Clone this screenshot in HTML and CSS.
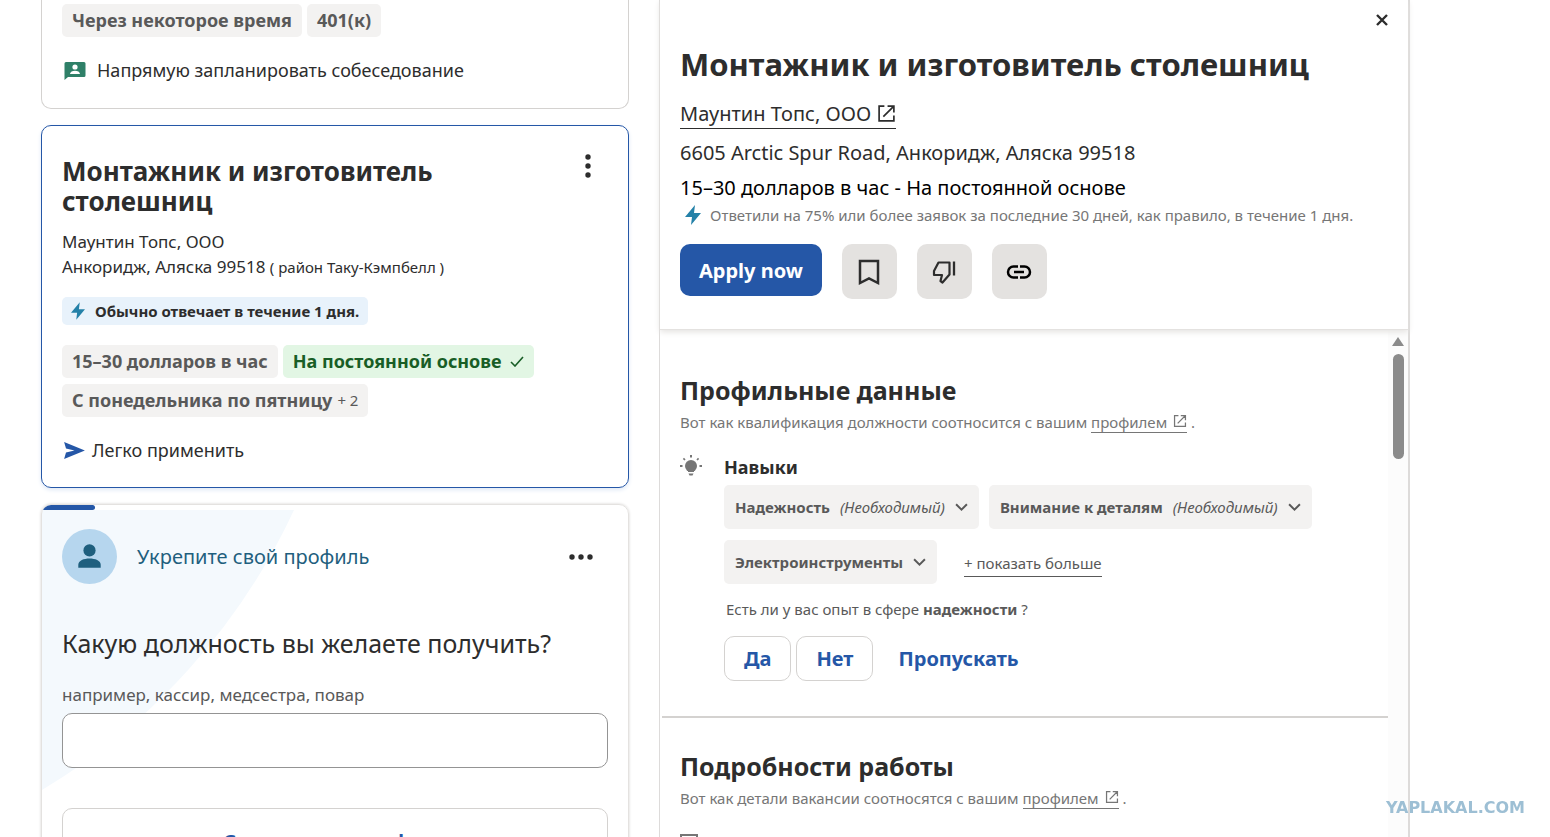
FILE: index.html
```html
<!DOCTYPE html>
<html lang="ru">

<head>
    <meta charset="UTF-8">
    <meta name="viewport" content="width=device-width, initial-scale=1">
    <title>Монтажник и изготовитель столешниц</title>
    <link rel="stylesheet" href="styles.css">
</head>

<body>

    <svg class="sprite" aria-hidden="true">
        <symbol id="bolt" viewBox="0 0 16 20">
            <path d="M10 0L0 12h7L6 20 16 8H9z" fill="#2481a8" />
        </symbol>
        <symbol id="external" viewBox="0 0 18 18">
            <path d="M7 2H2v14h14v-5M10 2h6v6M16 2L6 12" fill="none" stroke="currentColor" stroke-width="1.6" />
        </symbol>
        <symbol id="chevron" viewBox="0 0 12 8">
            <path d="M1 1l5 5 5-5" fill="none" stroke="currentColor" stroke-width="1.8" />
        </symbol>
    </svg>

    <main class="wrapper">
        <section class="results">
            <article class="card card-first">
                <ul class="tags">
                    <li class="tag">Через некоторое время</li>
                    <li class="tag">401(к)</li>
                </ul>
                <p class="note note-schedule">
                    <svg class="icon-schedule" viewBox="0 0 22 19">
                        <path d="M2 1h18a1.5 1.5 0 0 1 1.5 1.5v12a1.5 1.5 0 0 1-1.5 1.5H4l-3.5 3V2.5a1.5 1.5 0 0 1 1.5-1.5z" fill="#2f8068" />
                        <circle cx="11" cy="6" r="2.6" fill="#fff" />
                        <path d="M6 13c0-4.5 10-4.5 10 0z" fill="#fff" />
                    </svg>
                    Напрямую запланировать собеседование
                </p>
            </article>

            <article class="card card-active">
                <div class="card-head">
                    <h2>Монтажник и изготовитель столешниц</h2>
                    <button class="more" aria-label="Меню вакансии">
                        <svg class="dots-vertical" viewBox="0 0 6 24">
                            <circle cx="3" cy="3" r="2.7" />
                            <circle cx="3" cy="12" r="2.7" />
                            <circle cx="3" cy="21" r="2.7" />
                        </svg>
                    </button>
                </div>
                <p class="company">Маунтин Топс, ООО</p>
                <p class="company">Анкоридж, Аляска 99518 <small>( район Таку-Кэмпбелл )</small></p>
                <p class="badge"><svg class="icon-bolt">
                        <use href="#bolt" />
                    </svg>Обычно отвечает в течение 1 дня.</p>
                <ul class="tags">
                    <li class="tag">15–30 долларов в час</li>
                    <li class="tag match">На постоянной основе
                        <svg class="icon-check" viewBox="0 0 14 11">
                            <path d="M1 6l4 4 8-9" fill="none" stroke="currentColor" stroke-width="1.6" />
                        </svg>
                    </li>
                    <li class="tag">С понедельника по пятницу <small>+ 2</small></li>
                </ul>
                <p class="note note-apply">
                    <svg class="icon-send" viewBox="0 0 22 18">
                        <path d="M0 0l22 9-22 9 2-7 9-2-9-2z" fill="#2557a7" />
                    </svg>
                    Легко применить
                </p>
            </article>

            <article class="card card-profile">
                <svg class="backdrop" viewBox="0 0 252 280">
                    <path d="M0 0H252A642 642 0 0 1 0 280z" fill="#f4f9fd" />
                </svg>
                <div class="progress"></div>
                <div class="profile-head">
                    <svg class="avatar" viewBox="0 0 54 54">
                        <circle cx="27" cy="27" r="27" fill="#b6d6ee" />
                        <circle cx="27" cy="21" r="6" fill="#1f5f7e" />
                        <path d="M16 38v-3c0-8 22-8 22 0v3z" fill="#1f5f7e" />
                    </svg>
                    <h3>Укрепите свой профиль</h3>
                    <button class="more" aria-label="Меню профиля">
                        <svg class="dots-horizontal" viewBox="0 0 24 6">
                            <circle cx="3" cy="3" r="2.7" />
                            <circle cx="12" cy="3" r="2.7" />
                            <circle cx="21" cy="3" r="2.7" />
                        </svg>
                    </button>
                </div>
                <form>
                    <p class="question">Какую должность вы желаете получить?</p>
                    <label for="position">например, кассир, медсестра, повар</label>
                    <input type="text" id="position">
                    <button type="button" class="save">Сохранить в профиль</button>
                </form>
            </article>
        </section>

        <section class="details">
            <header>
                <button class="close" aria-label="Закрыть">
                    <svg viewBox="0 0 12 12">
                        <path d="M1 1l10 10M11 1L1 11" stroke="currentColor" stroke-width="2.4" />
                    </svg>
                </button>
                <h1>Монтажник и изготовитель столешниц</h1>
                <a class="employer" href="#">Маунтин Топс, ООО <svg class="icon-external">
                        <use href="#external" />
                    </svg></a>
                <p class="address">6605 Arctic Spur Road, Анкоридж, Аляска 99518</p>
                <p class="salary">15–30 долларов в час - На постоянной основе</p>
                <p class="response"><svg class="icon-bolt">
                        <use href="#bolt" />
                    </svg>Ответили на 75% или более заявок за последние 30 дней, как правило, в течение 1 дня.</p>
                <div class="actions">
                    <button class="apply">Apply now</button>
                    <button class="action" aria-label="Сохранить">
                        <svg viewBox="0 0 26 26">
                            <path d="M4 2h18v22l-9-4.5-9 4.5z" fill="none" stroke="#2d2d2d" stroke-width="2.5" />
                        </svg>
                    </button>
                    <button class="action" aria-label="Не интересует">
                        <svg viewBox="0 0 26 26">
                            <path d="M18.5 3.5H7.5L3 12v4h8l-1.5 6 2 1.5 7-8z" fill="none" stroke="#2d2d2d" stroke-width="2.2" stroke-linejoin="round" />
                            <path d="M23 2.5v14" stroke="#2d2d2d" stroke-width="2.3" />
                        </svg>
                    </button>
                    <button class="action" aria-label="Скопировать ссылку">
                        <svg viewBox="0 0 26 26">
                            <path d="M12 7.5H7.500a5 5 0 0 0 0 11H12M14 7.5h4.500a5 5 0 0 1 0 11H14M8 13h10" fill="none" stroke="#000" stroke-width="2.5" />
                        </svg>
                    </button>
                </div>
            </header>

            <div class="scroller">
                <div class="content">
                    <section class="block">
                        <h2>Профильные данные</h2>
                        <p class="hint">Вот как квалификация должности соотносится с вашим <a href="#">профилем <svg class="icon-external">
                                    <use href="#external" />
                                </svg></a> .</p>
                        <div class="skills">
                            <svg class="icon-bulb" viewBox="0 0 22 22">
                                <circle cx="11" cy="11" r="6" />
                                <path d="M8 14h6v3H8zM8.5 18.5h5l-1 2h-3z" />
                                <path d="M0 10h2.500v2H0zM19.5 10H22v2h-2.500zM10 0h2v2.500h-2zM2.800 4l1.200-1.200 1.600 1.600-1.200 1.200zM19.200 4L18 2.800l-1.600 1.600 1.200 1.200z" />
                            </svg>
                            <div>
                                <h3>Навыки</h3>
                                <div class="skill-list">
                                    <button class="skill">Надежность <i>(Необходимый)</i><svg class="icon-chevron">
                                            <use href="#chevron" />
                                        </svg></button>
                                    <button class="skill">Внимание к деталям <i>(Необходимый)</i><svg class="icon-chevron">
                                            <use href="#chevron" />
                                        </svg></button>
                                    <button class="skill">Электроинструменты<svg class="icon-chevron">
                                            <use href="#chevron" />
                                        </svg></button>
                                    <a class="show-more" href="#">+ показать больше</a>
                                </div>
                                <p class="ask">Есть ли у вас опыт в сфере <b>надежности</b> ?</p>
                                <div class="answers">
                                    <button>Да</button>
                                    <button>Нет</button>
                                    <button class="skip">Пропускать</button>
                                </div>
                            </div>
                        </div>
                    </section>
                    <section class="block block-job">
                        <h2>Подробности работы</h2>
                        <p class="hint">Вот как детали вакансии соотносятся с вашим <a href="#">профилем <svg class="icon-external">
                                    <use href="#external" />
                                </svg></a> .</p>
                        <svg class="icon-money" viewBox="0 0 18 16">
                            <path d="M1 1h16v14H1z" fill="none" stroke="#767676" stroke-width="2" />
                        </svg>
                    </section>
                </div>
                <div class="scrollbar">
                    <div class="arrow"></div>
                    <div class="thumb"></div>
                </div>
            </div>
        </section>
    </main>

    <div class="watermark">YAPLAKAL.COM</div>

</body></html>
```

FILE: styles.css
```css
* {
    margin: 0;
    padding: 0;
    box-sizing: border-box;
}

body {
    font-family: "Noto Sans", sans-serif;
    font-size: 18px;
    line-height: 25px;
    color: #2d2d2d;
    background: #fff;
    overflow: hidden;
}

button,
input {
    font: inherit;
    color: inherit;
    background: none;
    border: none;
}

button {
    cursor: pointer;
}

a {
    color: inherit;
    text-decoration: none;
    border-bottom: 1px solid;
}

ul {
    list-style: none;
}

svg {
    display: block;
    flex: none;
}

.sprite {
    display: none;
}

.wrapper {
    display: grid;
    grid-template-columns: 588fr 751fr;
    gap: 30px;
    height: 100vh;
    padding: 0 140px 0 41px;
    overflow: hidden;
}

/* left column */

.results {
    display: flex;
    flex-direction: column;
    gap: 16px;
    min-width: 0;
}

.card {
    flex: none;
    padding: 0 20px;
    border: 1px solid #d4d2d0;
    border-radius: 10px;
}

.card-first {
    height: 109px;
    padding-top: 4px;
    border-top: none;
    border-radius: 0 0 10px 10px;
}

.tags {
    display: flex;
    flex-wrap: wrap;
    gap: 6px 5px;
}

.tag {
    display: flex;
    align-items: center;
    gap: 5px;
    height: 33px;
    padding: 0 10px;
    font-weight: bold;
    color: #595959;
    background: #f3f2f1;
    border-radius: 5px;
}

.tag small {
    font-size: 15px;
    font-weight: normal;
}

.match {
    gap: 8px;
    color: #185e26;
    background: #e2f6e4;
}

.icon-check {
    width: 14px;
    height: 11px;
}

.note {
    display: flex;
    align-items: center;
    gap: 11px;
    margin-top: 21px;
    padding-left: 2px;
}

.note-apply {
    gap: 7px;
}

.icon-schedule {
    width: 22px;
    height: 19px;
}

.icon-send {
    width: 21px;
    height: 17px;
}

.card-active {
    height: 363px;
    padding-top: 30px;
    border-color: #2557a7;
    box-shadow: 0 2px 4px #dfe8f5;
}

.card-head {
    display: flex;
    justify-content: space-between;
    align-items: flex-start;
    margin-bottom: 13px;
}

.card-head h2 {
    max-width: 400px;
    font-size: 26px;
    line-height: 30px;
}

.more {
    display: flex;
    align-items: center;
    justify-content: center;
    width: 40px;
    height: 20px;
}

.dots-vertical {
    width: 6px;
    height: 24px;
}

.dots-horizontal {
    width: 24px;
    height: 6px;
}

.company {
    font-size: 17px;
}

.company small {
    font-size: 15px;
}

.badge {
    display: flex;
    align-items: center;
    gap: 10px;
    width: max-content;
    height: 28px;
    margin: 17px 0 20px;
    padding: 0 9px;
    font-size: 15px;
    font-weight: bold;
    background: #e8f2fb;
    border-radius: 5px;
}

.icon-bolt {
    width: 14px;
    height: 18px;
}

.card-profile {
    position: relative;
    height: 400px;
    border-color: #e4e2e0;
    box-shadow: 0 0 3px #d4d2d0;
    overflow: hidden;
}

.backdrop {
    position: absolute;
    top: 5px;
    left: 0;
    width: 252px;
    height: 280px;
    z-index: -1;
}

.progress {
    width: 53px;
    height: 5px;
    margin-left: -20px;
    background: #2557a7;
    border-radius: 0 3px 3px 0;
}

.profile-head {
    display: flex;
    align-items: center;
    gap: 20px;
    margin-top: 19px;
    color: #1f5f7e;
}

.profile-head h3 {
    flex: 1;
    font-size: 20px;
    font-weight: normal;
}

.profile-head .more {
    margin-right: 7px;
}

.more svg {
    fill: #2d2d2d;
}

.avatar {
    width: 55px;
    height: 55px;
}

.question {
    margin: 42px 0 22px;
    font-size: 25px;
    line-height: 34px;
}

.card-profile label {
    display: block;
    font-size: 17px;
    color: #595959;
}

.card-profile input {
    display: block;
    width: 100%;
    height: 55px;
    margin: 6px 0 40px;
    padding: 0 12px;
    background: #fff;
    border: 1px solid #949494;
    border-radius: 10px;
}

.save {
    width: 100%;
    height: 66px;
    font-size: 20px;
    font-weight: bold;
    color: #2557a7;
    border: 1px solid #d4d2d0;
    border-radius: 10px;
}

/* right column */

.details {
    display: flex;
    flex-direction: column;
    min-width: 0;
    height: 100vh;
    border: 1px solid #dddbda;
    border-width: 0 2px 0 1px;
}

.details header {
    position: relative;
    height: 330px;
    padding: 43px 20px 0;
    border-bottom: 1px solid #e4e2e0;
    box-shadow: 0 2px 6px #e4e2e0;
    z-index: 1;
}

.close {
    position: absolute;
    top: 9px;
    right: 15px;
    padding: 5px;
}

.close svg {
    width: 12px;
    height: 12px;
}

h1 {
    margin-bottom: 16px;
    font-size: 31px;
    line-height: 42px;
}

.employer {
    display: flex;
    align-items: center;
    gap: 6px;
    width: max-content;
    height: 28px;
    padding-bottom: 2px;
    font-size: 20px;
}

.employer .icon-external {
    width: 19px;
    height: 19px;
}

.address {
    margin: 11px 0 10px;
    font-size: 20px;
}

.salary {
    font-size: 20px;
    color: #000;
}

.response {
    display: flex;
    align-items: center;
    gap: 9px;
    height: 30px;
    padding-left: 5px;
    font-size: 15px;
    color: #767676;
    white-space: nowrap;
}

.response .icon-bolt {
    width: 16px;
    height: 20px;
}

.actions {
    display: flex;
    align-items: flex-start;
    gap: 20px;
    margin-top: 14px;
}

.apply {
    height: 52px;
    padding: 0 19px;
    font-size: 20px;
    font-weight: bold;
    color: #fff;
    background: #2557a7;
    border-radius: 10px;
}

.action {
    display: flex;
    align-items: center;
    justify-content: center;
    width: 55px;
    height: 55px;
    background: #e4e2e0;
    border-radius: 10px;
}

.action svg {
    width: 26px;
    height: 26px;
}

.scroller {
    display: flex;
    flex: 1;
    min-height: 0;
}

.content {
    flex: 1;
    min-width: 0;
    padding-left: 2px;
    overflow: hidden;
}

.block {
    padding: 43px 18px 35px;
    border-bottom: 2px solid #d4d2d0;
}

.block-job {
    padding-top: 31px;
}

.block h2 {
    font-size: 25px;
    line-height: 34px;
}

.hint {
    margin-top: 3px;
    font-size: 15px;
    color: #767676;
}

.hint .icon-external {
    display: inline-block;
    width: 14px;
    height: 14px;
    margin-left: 2px;
}

.skills {
    display: flex;
    gap: 22px;
    margin-top: 20px;
}

.icon-bulb {
    width: 22px;
    height: 22px;
    fill: #767676;
}

.skills h3 {
    margin-bottom: 5px;
    font-size: 18px;
}

.skill-list {
    display: flex;
    flex-wrap: wrap;
    gap: 11px 10px;
}

.skill {
    display: flex;
    align-items: center;
    gap: 10px;
    height: 44px;
    padding: 0 11px;
    font-size: 15px;
    font-weight: bold;
    color: #595959;
    background: #f3f2f1;
    border-radius: 5px;
}

.skill i {
    font-weight: normal;
}

.icon-chevron {
    width: 13px;
    height: 9px;
}

.show-more {
    align-self: flex-end;
    margin: 0 0 7px 17px;
    font-size: 15px;
    color: #595959;
}

.ask {
    margin: 13px 0 14px 2px;
    font-size: 15px;
    color: #595959;
}

.answers {
    display: flex;
    gap: 5px;
}

.answers button {
    height: 45px;
    padding: 0 19px;
    font-size: 20px;
    font-weight: bold;
    color: #2557a7;
    border: 1px solid #d4d2d0;
    border-radius: 10px;
}

.answers .skip {
    border-color: transparent;
}

.icon-money {
    width: 18px;
    height: 16px;
    margin-top: 23px;
}

.scrollbar {
    display: flex;
    flex-direction: column;
    align-items: center;
    gap: 8px;
    width: 20px;
    padding-top: 7px;
    background: #fcfcfc;
}

.arrow {
    border: 6px solid transparent;
    border-top: none;
    border-bottom: 9px solid #8b8b8b;
}

.thumb {
    width: 11px;
    height: 105px;
    background: #8b8b8b;
    border-radius: 6px;
}

.watermark {
    position: fixed;
    right: 25px;
    bottom: 17px;
    font-family: "DejaVu Sans", sans-serif;
    font-size: 16px;
    line-height: 24px;
    font-weight: bold;
    color: #9dbfd4;
}
```
